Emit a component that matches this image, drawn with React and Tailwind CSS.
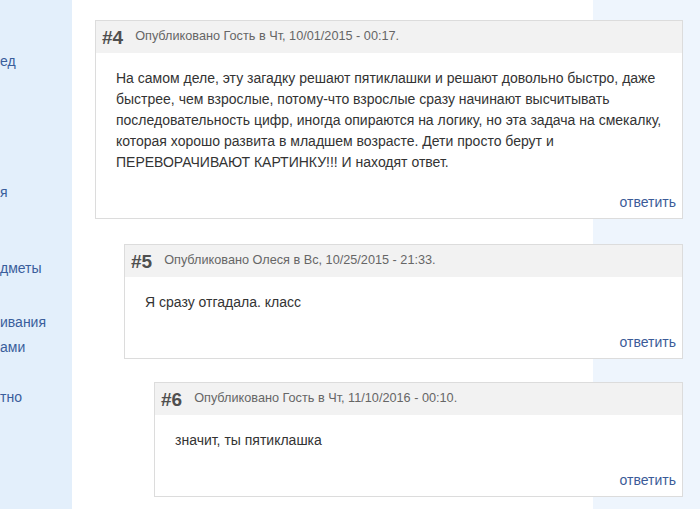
const comments = [
  {
    num: "#4",
    meta: "Опубликовано Гость в Чт, 10/01/2015 - 00:17.",
    text: "На самом деле, эту загадку решают пятиклашки и решают довольно быстро, даже быстрее, чем взрослые, потому-что взрослые сразу начинают высчитывать последовательность цифр, иногда опираются на логику, но эта задача на смекалку, которая хорошо развита в младшем возрасте. Дети просто берут и ПЕРЕВОРАЧИВАЮТ КАРТИНКУ!!! И находят ответ.",
    indent: "ml-[23px] mt-[20px]",
  },
  {
    num: "#5",
    meta: "Опубликовано Олеся в Вс, 10/25/2015 - 21:33.",
    text: "Я сразу отгадала. класс",
    indent: "ml-[52px] mt-[25px]",
  },
  {
    num: "#6",
    meta: "Опубликовано Гость в Чт, 11/10/2016 - 00:10.",
    text: "значит, ты пятиклашка",
    indent: "ml-[82px] mt-[23px]",
  },
];

const sideLinks = [
  { t: "ед", mt: "mt-[51px]" },
  { t: "я", mt: "mt-[110px]" },
  { t: "дметы", mt: "mt-[55px]" },
  { t: "ивания", mt: "mt-[33px]" },
  { t: "ами", mt: "mt-[4px]" },
  { t: "тно", mt: "mt-[29px]" },
];

const Comment = ({ c }) => (
  <div className={`${c.indent} border border-[#dcdcdc] bg-white`}>
    <div className="flex items-center h-[32px] bg-[#f2f2f2] pl-[6px] gap-[12px]">
      <span className="text-[19px] font-bold text-[#4f4f4f] leading-none">{c.num}</span>
      <span className="text-[12.7px] text-[#666]">{c.meta}</span>
    </div>
    <div className="pt-[15px] pb-[19px] pl-[20px] pr-[20px] text-[14px] leading-[21px] text-[#333]">
      {c.text}
    </div>
    <div className="flex justify-end pr-[6px] pb-[6px] text-[14px] leading-[20px]">
      <a className="text-[#3b5b98]" href="#">ответить</a>
    </div>
  </div>
);

export default function App() {
  return (
    <div className="flex w-[700px] h-[509px] overflow-hidden [font-family:'Liberation_Sans',Arial,sans-serif]">
      <aside className="w-[72px] shrink-0 bg-[#e3effb] flex flex-col text-[14px] leading-[21px] text-[#3a5e9c]">
        {sideLinks.map((s, i) => (
          <span key={i} className={s.mt}>{s.t}</span>
        ))}
      </aside>
      <main className="flex-1 bg-[linear-gradient(to_right,#ffffff_521px,#eef5fd_521px)] pr-[17px]">
        {comments.map((c) => (
          <Comment key={c.num} c={c} />
        ))}
      </main>
    </div>
  );
}
